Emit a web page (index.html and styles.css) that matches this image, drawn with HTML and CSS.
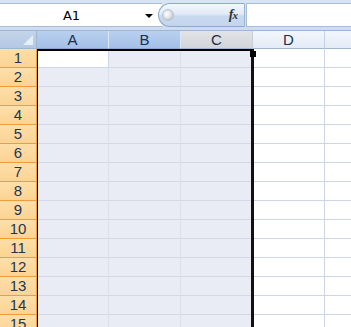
FILE: index.html
```html
<!DOCTYPE html>
<html>
<head>
<meta charset="utf-8">
<link rel="stylesheet" href="styles.css">
</head>
<body>
<div class="app">
  <div class="fbar">
    <div class="namebox"><span class="nb-text">A1</span><span class="nb-arrow"></span></div>
    <div class="pill"><span class="grip"></span><span class="fx"><i>f</i><i class="x">x</i></span></div>
    <div class="finput"></div>
  </div>
  <div class="sheet-wrap">
    <div class="sheet">
      <div class="corner"><svg width="12" height="12" viewBox="0 0 12 12"><polygon points="11,1 11,11 1,11" fill="#e6eef8"/></svg></div>
      <div class="ch sel">A</div>
      <div class="ch sel">B</div>
      <div class="ch dim">C</div>
      <div class="ch">D</div>
      <div class="ch"></div>

      <div class="rh">1</div><div class="c active"></div><div class="c s"></div><div class="c s"></div><div class="c"></div><div class="c"></div>
      <div class="rh">2</div><div class="c s"></div><div class="c s"></div><div class="c s"></div><div class="c"></div><div class="c"></div>
      <div class="rh">3</div><div class="c s"></div><div class="c s"></div><div class="c s"></div><div class="c"></div><div class="c"></div>
      <div class="rh">4</div><div class="c s"></div><div class="c s"></div><div class="c s"></div><div class="c"></div><div class="c"></div>
      <div class="rh">5</div><div class="c s"></div><div class="c s"></div><div class="c s"></div><div class="c"></div><div class="c"></div>
      <div class="rh">6</div><div class="c s"></div><div class="c s"></div><div class="c s"></div><div class="c"></div><div class="c"></div>
      <div class="rh">7</div><div class="c s"></div><div class="c s"></div><div class="c s"></div><div class="c"></div><div class="c"></div>
      <div class="rh">8</div><div class="c s"></div><div class="c s"></div><div class="c s"></div><div class="c"></div><div class="c"></div>
      <div class="rh">9</div><div class="c s"></div><div class="c s"></div><div class="c s"></div><div class="c"></div><div class="c"></div>
      <div class="rh">10</div><div class="c s"></div><div class="c s"></div><div class="c s"></div><div class="c"></div><div class="c"></div>
      <div class="rh">11</div><div class="c s"></div><div class="c s"></div><div class="c s"></div><div class="c"></div><div class="c"></div>
      <div class="rh">12</div><div class="c s"></div><div class="c s"></div><div class="c s"></div><div class="c"></div><div class="c"></div>
      <div class="rh">13</div><div class="c s"></div><div class="c s"></div><div class="c s"></div><div class="c"></div><div class="c"></div>
      <div class="rh">14</div><div class="c s"></div><div class="c s"></div><div class="c s"></div><div class="c"></div><div class="c"></div>
      <div class="rh">15</div><div class="c s"></div><div class="c s"></div><div class="c s"></div><div class="c"></div><div class="c"></div>
    </div>
    <div class="selection"><span class="handle"></span></div>
  </div>
</div>
</body>
</html>
```

FILE: styles.css
```css
* { box-sizing: border-box; }
html, body { margin: 0; padding: 0; }
body {
  width: 351px;
  height: 327px;
  overflow: hidden;
  background: #ffffff;
  font-family: "Liberation Sans", Arial, sans-serif;
}
.app { width: 351px; height: 327px; overflow: hidden; }

/* formula bar */
.fbar {
  height: 31px;
  background: linear-gradient(#d7e4f4, #cddcf0);
  border-bottom: 1px solid #9fb6d2;
  display: flex;
  align-items: flex-start;
  padding-top: 3px;
}
.namebox {
  width: 162px;
  height: 24px;
  background: #ffffff;
  border-top: 1px solid #a9bdd6;
  border-bottom: 1px solid #a9bdd6;
  display: flex;
  align-items: center;
  position: relative;
  margin-right: -4px;
}
.nb-text {
  flex: 1;
  text-align: center;
  font-family: "DejaVu Sans", sans-serif;
  font-size: 13px;
  color: #000;
  padding-right: 2px;
}
.nb-arrow {
  width: 0; height: 0;
  border-left: 4px solid transparent;
  border-right: 4px solid transparent;
  border-top: 4px solid #000;
  margin-right: 9px;
  margin-top: 1px;
}
.pill {
  width: 87px;
  height: 24px;
  border: 1px solid #8ea9cb;
  border-right-color: #9cb3d1;
  border-radius: 12px 0 0 12px;
  background: linear-gradient(#f4f8fd 0%, #e1eaf6 45%, #c9d9ee 55%, #c3d5ee 100%);
  display: flex;
  align-items: center;
  position: relative;
}
.grip {
  width: 12px; height: 12px;
  border-radius: 50%;
  margin-left: 3px;
  background: radial-gradient(circle at 40% 40%, #ffffff 0%, #e4e7ec 40%, #a8afb9 100%);
  border: 1px solid #b6c3d4;
}
.fx {
  margin-left: auto;
  margin-right: 7px;
  font-family: "Liberation Serif", "Times New Roman", serif;
  font-size: 14px;
  color: #333;
  font-weight: bold;
  letter-spacing: -1px;
}
.fx .x { font-size: 11px; }
.finput {
  flex: 1;
  height: 24px;
  background: #ffffff;
  border: 1px solid #a9bdd6;
  border-right: none;
  margin-left: 1px;
}

/* sheet */
.sheet-wrap { position: relative; }
.sheet {
  display: grid;
  grid-template-columns: 37px 72px 72px 72px 72px 72px;
  grid-template-rows: 18px;
  grid-auto-rows: 19px;
}
.corner {
  background: linear-gradient(#c4d5ea, #b3c8e3);
  border-right: 1px solid #9eb6ce;
  border-bottom: 1px solid #9eb6ce;
  display: flex;
  align-items: flex-end;
  justify-content: flex-end;
  padding: 0 2px 2px 0;
}
.corner svg { display: block; }
.ch {
  background: linear-gradient(#f3f7fc, #e4ebf5);
  border-right: 1px solid #c5d2e3;
  border-bottom: 1px solid #9eb6ce;
  text-align: center;
  font-size: 15px;
  line-height: 17px;
  color: #1c2f4d;
}
.ch.sel {
  background: linear-gradient(#b9d0ef, #a4c0e8);
  border-right-color: #dce7f5;
  border-bottom-color: #8ba7c9;
}
.ch.dim {
  background: linear-gradient(#e2e3e6, #d2d5da);
  border-right-color: #c9ced6;
}
.rh {
  background: linear-gradient(#fedfa9, #fbd394);
  border-right: 1px solid #f19c3b;
  border-bottom: 1px solid #f19c3b;
  text-align: center;
  font-size: 15px;
  line-height: 18px;
  color: #1d3656;
}
.c {
  border-right: 1px solid #cfd6e3;
  border-bottom: 1px solid #cfd6e3;
  background: #ffffff;
}
.c.s {
  background: #e9ecf4;
  border-right-color: #dadfe9;
  border-bottom-color: #d3d8e4;
}
.c.active { background: #ffffff; }

/* selection overlay */
.selection {
  position: absolute;
  left: 37px;
  top: 18px;
  width: 217px;
  height: 300px;
  border-top: 2px solid #000;
  border-left: 1px solid #000;
  border-right: 3px solid #111;
  pointer-events: none;
}
.handle {
  position: absolute;
  right: -5px;
  top: 0px;
  width: 6px;
  height: 6px;
  background: #000;
}
```
